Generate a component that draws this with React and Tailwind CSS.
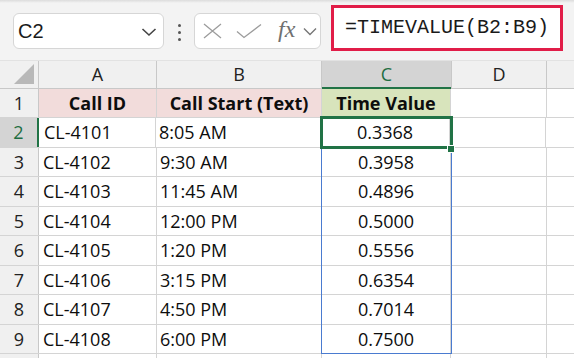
import React from "react";

const rows = [
  ["CL-4101", "8:05 AM", "0.3368"],
  ["CL-4102", "9:30 AM", "0.3958"],
  ["CL-4103", "11:45 AM", "0.4896"],
  ["CL-4104", "12:00 PM", "0.5000"],
  ["CL-4105", "1:20 PM", "0.5556"],
  ["CL-4106", "3:15 PM", "0.6354"],
  ["CL-4107", "4:50 PM", "0.7014"],
  ["CL-4108", "6:00 PM", "0.7500"],
];
const heights = ["h-[30px]", "h-[29px]", "h-[30px]", "h-[29px]", "h-[30px]", "h-[29px]", "h-[30px]", "h-[29px]"];

export default function App() {
  return (
    <div className="w-[574px] h-[358px] overflow-hidden bg-white text-[#0d0d0d]" style={{ fontFamily: '"Open Sans", sans-serif' }}>
      {/* Toolbar */}
      <div className="relative h-[61px] bg-[#f3f3f3] border-b border-[#e2e2e2] flex items-start">
        <div className="absolute top-0 left-0 right-0 h-[3px] bg-gradient-to-b from-[#dcdcdc] to-[#f3f3f3]" />
        <div className="ml-[13px] mt-[13px] w-[151px] h-[36px] bg-white border border-[#d6d6d6] rounded-[6px] flex items-center justify-between pl-[4px] pr-[6px]">
          <span className="text-[20px] leading-none text-[#1a1a1a]" style={{ fontFamily: '"Liberation Sans", sans-serif' }}>C2</span>
          <svg width="16" height="10" viewBox="0 0 16 10" className="mt-[2px]">
            <path d="M1.5 2 L8 8 L14.5 2" fill="none" stroke="#444" strokeWidth="1.6" />
          </svg>
        </div>
        <div className="ml-[14px] mt-[24px] flex flex-col gap-[4px]">
          <div className="w-[3px] h-[3px] rounded-full bg-[#555]" />
          <div className="w-[3px] h-[3px] rounded-full bg-[#555]" />
          <div className="w-[3px] h-[3px] rounded-full bg-[#555]" />
        </div>
        <div className="ml-[13px] mt-[13px] w-[127px] h-[36px] bg-white border border-[#d6d6d6] rounded-[6px] flex items-center">
          <svg width="19" height="16" viewBox="0 0 19 16" className="ml-[8px]">
            <path d="M1 1 L18 15 M18 1 L1 15" stroke="#9c9c9c" strokeWidth="1.3" fill="none" />
          </svg>
          <svg width="26" height="16" viewBox="0 0 26 16" className="ml-[14px]">
            <path d="M1 8.5 L8 14.5 L25 1.5" stroke="#9c9c9c" strokeWidth="1.3" fill="none" />
          </svg>
          <span className="ml-[16px] text-[24px] leading-none italic text-[#707070] -mt-[4px]" style={{ fontFamily: '"Liberation Serif", serif' }}>fx</span>
          <svg width="14" height="9" viewBox="0 0 14 9" className="ml-[8px]">
            <path d="M1 1.5 L7 7.5 L13 1.5" fill="none" stroke="#777" strokeWidth="1.4" />
          </svg>
        </div>
        <div className="ml-[10px] mt-[5px] w-[232px] h-[46px] border-[3px] border-[#e11d48] bg-white flex items-center pl-[11px]">
          <span className="text-[20px] leading-none text-[#1a1a1a]" style={{ fontFamily: '"Liberation Mono", monospace' }}>=TIMEVALUE(B2:B9)</span>
        </div>
      </div>

      {/* Column headers */}
      <div className="flex h-[28px] bg-[#f0f0f0] border-b border-[#c8c8c8] text-[18px] text-[#222]">
        <div className="relative w-[39px] border-r border-[#c8c8c8]">
          <svg width="20" height="20" viewBox="0 0 20 20" className="absolute right-[4px] bottom-[4px]">
            <path d="M20 0 L20 20 L0 20 Z" fill="#b8b8b8" />
          </svg>
        </div>
        <div className="w-[118px] border-r border-[#c8c8c8] flex items-center justify-center">A</div>
        <div className="w-[165px] border-r border-[#c8c8c8] flex items-center justify-center">B</div>
        <div className="w-[129px] bg-[#d4d4d4] border-b-[2px] border-b-[#217346] -mb-px flex items-center justify-center text-[#1e6e42]">C</div>
        <div className="w-[96px] border-l border-r border-[#c8c8c8] flex items-center justify-center">D</div>
        <div className="flex-1" />
      </div>

      {/* Body */}
      <div className="relative">
        {/* Row 1 */}
        <div className="flex h-[29px] border-b border-[#d4d4d4] text-[18px]">
          <div className="w-[39px] bg-[#f0f0f0] border-r border-[#c8c8c8] flex items-center justify-center text-[#222]">1</div>
          <div className="w-[118px] bg-[#f2dcdb] border-r border-[#d4d4d4] flex items-center justify-center font-bold">Call ID</div>
          <div className="w-[165px] bg-[#f2dcdb] border-r border-[#d4d4d4] flex items-center justify-center font-bold">Call Start (Text)</div>
          <div className="w-[129px] bg-[#d8e4bc] border-r border-[#d4d4d4] flex items-center justify-center font-bold">Time Value</div>
          <div className="w-[96px] border-r border-[#d4d4d4]" />
          <div className="flex-1" />
        </div>
        {rows.map((r, i) => (
          <div key={i} className={`flex ${heights[i]} border-b border-[#d4d4d4] text-[18px]`}>
            <div
              className={
                i === 0
                  ? "w-[39px] bg-[#d4d4d4] border-r-[2px] border-r-[#217346] flex items-center justify-center text-[#1e6e42]"
                  : "w-[39px] bg-[#f0f0f0] border-r border-[#c8c8c8] flex items-center justify-center text-[#222]"
              }
            >
              {i + 2}
            </div>
            <div className={i === 0 ? "w-[117px] border-r border-[#d4d4d4] flex items-center pl-[5px]" : "w-[118px] border-r border-[#d4d4d4] flex items-center pl-[4px]"}>{r[0]}</div>
            <div className="w-[165px] border-r border-[#d4d4d4] flex items-center pl-[3px]">{r[1]}</div>
            <div className="w-[129px] border-r border-[#d4d4d4] flex items-center justify-center">{r[2]}</div>
            <div className="w-[96px] border-r border-[#d4d4d4]" />
            <div className="flex-1" />
          </div>
        ))}
        <div className="flex h-[20px] text-[18px]">
          <div className="w-[39px] bg-[#f0f0f0] border-r border-[#c8c8c8]" />
          <div className="w-[118px] border-r border-[#d4d4d4]" />
          <div className="w-[165px] border-r border-[#d4d4d4]" />
          <div className="w-[129px] border-r border-[#d4d4d4]" />
          <div className="w-[96px] border-r border-[#d4d4d4]" />
        </div>

        {/* Range highlight C2:C9 */}
        <div className="absolute left-[321px] top-[28px] w-[131px] h-[237px] border-[1.5px] border-[#4a7bd0] pointer-events-none" />
        {/* Active cell C2 */}
        <div className="absolute left-[320px] top-[27px] w-[133px] h-[33px] border-[3px] border-[#217346] pointer-events-none" />
        <div className="absolute left-[447px] top-[56px] w-[8px] h-[8px] bg-[#217346] border border-white pointer-events-none" />
      </div>
    </div>
  );
}
